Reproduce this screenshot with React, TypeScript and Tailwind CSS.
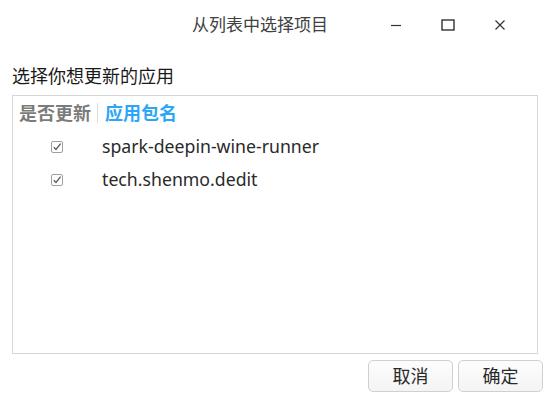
import { useState } from "react";

const packages = ["spark-deepin-wine-runner", "tech.shenmo.dedit"];

function CheckMark() {
  return (
    <svg width="12" height="12" viewBox="0 0 12 12" className="block">
      <rect x="0.5" y="0.5" width="11" height="11" rx="1.5" fill="#fff" stroke="#a0a0a0" />
      <path d="M2.8 6.2 L5 8.4 L9.6 2.6" fill="none" stroke="#5a5a5a" strokeWidth="1.3" />
    </svg>
  );
}

export default function App() {
  const [checked, setChecked] = useState(packages.map(() => true));

  return (
    <div
      className="flex h-[400px] w-[550px] flex-col bg-white text-[#303030]"
      style={{ fontFamily: '"Noto Sans", "Noto Sans CJK SC", sans-serif' }}
    >
      {/* title bar */}
      <div className="relative flex h-[50px] shrink-0 items-center justify-center pr-[30px]">
        <span className="text-[17px] text-[#414141]">从列表中选择项目</span>
        <div className="absolute right-[24px] top-0 flex h-[50px] items-center">
          <button className="flex h-[50px] w-[52px] items-center justify-center">
            <svg width="12" height="12" viewBox="0 0 12 12">
              <path d="M1 6.5 H11" stroke="#333" strokeWidth="1.2" />
            </svg>
          </button>
          <button className="flex h-[50px] w-[52px] items-center justify-center">
            <svg width="14" height="12" viewBox="0 0 14 12">
              <rect x="1" y="1" width="12" height="10" fill="none" stroke="#333" strokeWidth="1.4" />
            </svg>
          </button>
          <button className="flex h-[50px] w-[52px] items-center justify-center">
            <svg width="12" height="12" viewBox="0 0 12 12">
              <path d="M1.5 1.5 L10.5 10.5 M10.5 1.5 L1.5 10.5" stroke="#333" strokeWidth="1.2" />
            </svg>
          </button>
        </div>
      </div>

      <div className="flex flex-1 flex-col px-3 pt-[14px]">
        <p className="text-[18px] leading-[24px] text-[#1a1a1a]">选择你想更新的应用</p>

        <div className="mt-[7px] h-[259px] border border-[#d6d6d6] bg-white">
          <div className="flex h-[34px] items-center pl-[6px] text-[18px] font-bold">
            <span className="w-[78px] text-[#7b7b7b]">是否更新</span>
            <span className="h-[20px] w-px bg-[#dcdcdc]" />
            <span className="pl-[7px] text-[#2ca7f8]">应用包名</span>
          </div>
          {packages.map((name, i) => (
            <div key={name} className="flex h-[33px] items-center">
              <button
                className="ml-[38px] w-[12px]"
                onClick={() => setChecked(c => c.map((v, j) => (j === i ? !v : v)))}
              >
                {checked[i] && <CheckMark />}
              </button>
              <span className="ml-[39px] text-[17.7px] text-[#2a2a2a]">{name}</span>
            </div>
          ))}
        </div>

        <div className="mt-[6px] flex justify-end gap-[5px]">
          <button className="h-[32px] w-[85px] rounded-[5px] border border-[#d0d0d0] bg-gradient-to-b from-[#fdfdfd] to-[#f4f4f4] text-[18px] text-[#2a2a2a]">
            取消
          </button>
          <button className="-mr-[5px] h-[32px] w-[85px] rounded-[5px] border border-[#d0d0d0] bg-gradient-to-b from-[#fdfdfd] to-[#f4f4f4] text-[18px] text-[#2a2a2a]">
            确定
          </button>
        </div>
      </div>
    </div>
  );
}
